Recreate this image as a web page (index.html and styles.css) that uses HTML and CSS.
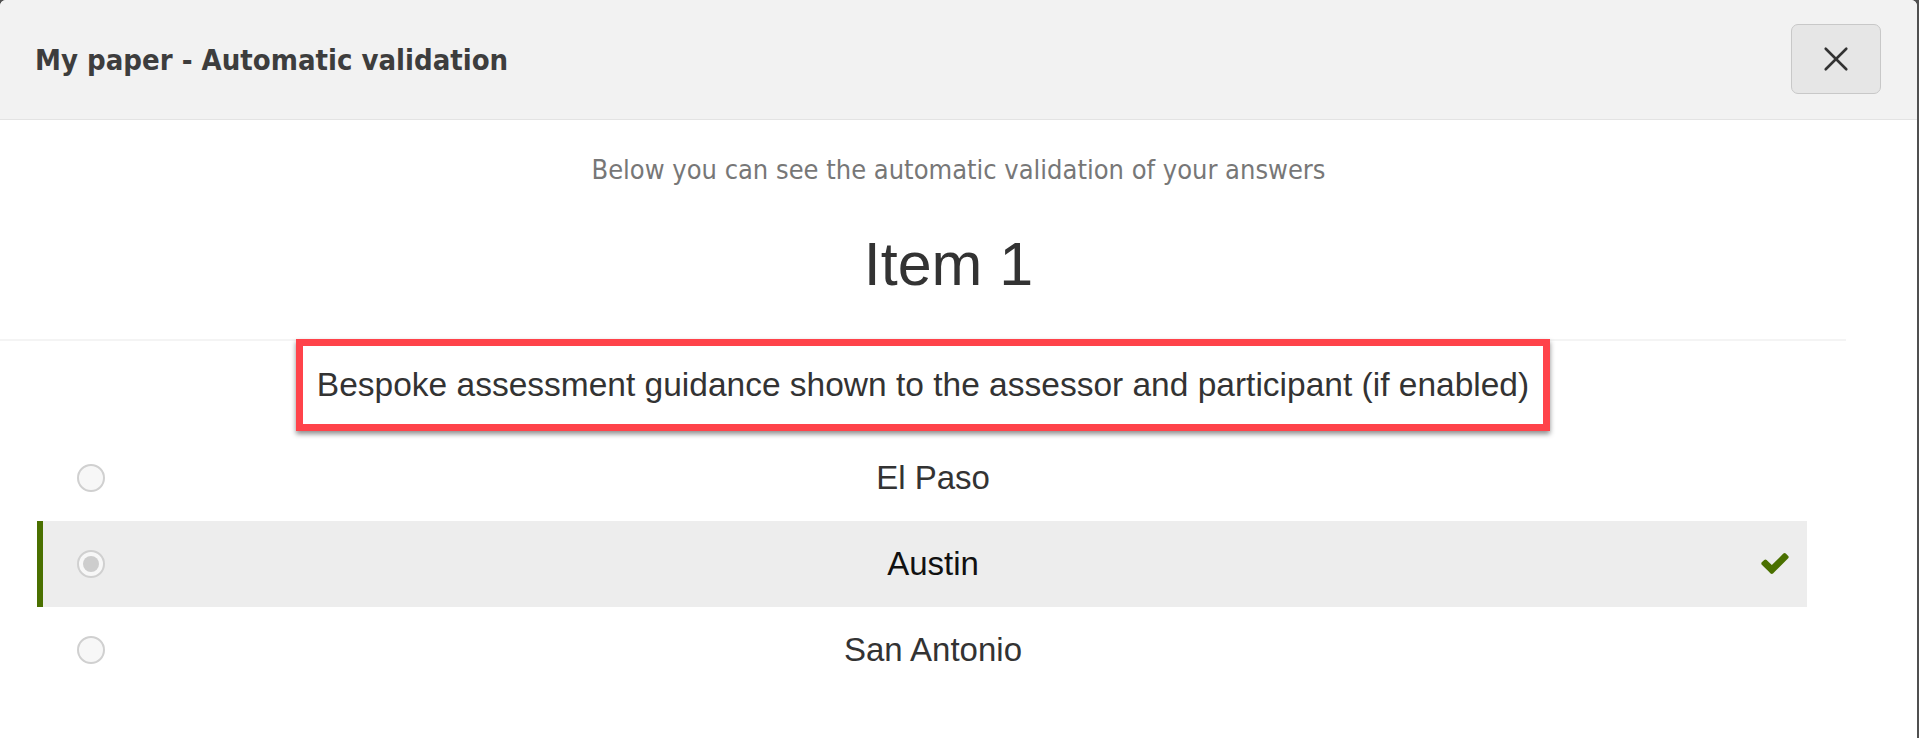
FILE: index.html
```html
<!DOCTYPE html>
<html lang="en">
<head>
  <meta charset="UTF-8" />
  <title>My paper - Automatic validation</title>
  <link rel="stylesheet" href="styles.css">
</head>
<body>
  <div class="modal">
    <div class="modal-header">
      <h1 class="modal-title">My paper - Automatic validation</h1>
      <button class="close-btn" aria-label="Close">
        <svg width="26" height="26" viewBox="0 0 24 24">
          <path d="M2.5 2.5 L21.5 21.5 M21.5 2.5 L2.5 21.5" stroke="#333" stroke-width="2.4" stroke-linecap="round" fill="none"/>
        </svg>
      </button>
    </div>

    <div class="modal-body">
      <p class="intro">Below you can see the automatic validation of your answers</p>
      <h2 class="item-title">Item 1</h2>

      <div class="item-area">
        <div class="guidance">Bespoke assessment guidance shown to the assessor and participant (if enabled)</div>

        <div class="options">
          <div class="option">
            <span class="radio"></span>
            <span class="label">El Paso</span>
          </div>
          <div class="option selected">
            <span class="radio"></span>
            <span class="label">Austin</span>
            <svg class="check" width="28" height="21" viewBox="121 334 1550 1188">
              <path fill="#4a7000" d="M1671 566q0 40-28 68l-724 724-136 136q-28 28-68 28t-68-28l-136-136-362-362q-28-28-28-68t28-68l136-136q28-28 68-28t68 28l294 295 656-657q28-28 68-28t68 28l136 136q28 28 28 68z"/>
            </svg>
          </div>
          <div class="option">
            <span class="radio"></span>
            <span class="label">San Antonio</span>
          </div>
        </div>
      </div>
    </div>
  </div>
</body>
</html>
```

FILE: styles.css
```css
body {
  margin: 0;
  padding: 0;
  background: #505050;
  height: 738px;
  overflow: hidden;
}
.modal {
  width: 1917px;
  height: 738px;
  background: #fff;
  border-radius: 6px 6px 0 0;
  overflow: hidden;
}
.modal-header {
  height: 119px;
  background: #f2f2f2;
  border-bottom: 1px solid #e3e3e3;
  display: flex;
  align-items: center;
  justify-content: space-between;
  padding: 0 36px 0 35px;
}
.modal-title {
  margin: 0;
  font-family: "DejaVu Sans", sans-serif;
  font-stretch: condensed;
  font-weight: bold;
  font-size: 29px;
  color: #3d3d3d;
}
.close-btn {
  width: 90px;
  height: 70px;
  margin-top: -2px;
  background: #e6e6e6;
  border: 1px solid #c8c8c8;
  border-radius: 7px;
  display: flex;
  align-items: center;
  justify-content: center;
  padding: 0;
  cursor: pointer;
}
.modal-body {
  display: flex;
  flex-direction: column;
  align-items: center;
}
.intro {
  margin: 36px 0 0;
  font-family: "DejaVu Sans", sans-serif;
  font-stretch: condensed;
  font-size: 27px;
  color: #777;
  line-height: 28px;
}
.item-title {
  margin: 45px 20px 0 0;
  font-family: "Liberation Sans", Arial, sans-serif;
  font-weight: normal;
  font-size: 61px;
  line-height: 70px;
  color: #333;
  height: 110px;
}
.item-area {
  align-self: flex-start;
  width: 1846px;
  border-top: 2px solid #f4f4f4;
  display: flex;
  flex-direction: column;
  align-items: center;
}
.guidance {
  margin-top: -2px;
  width: 1240px;
  height: 78px;
  border: 7px solid #ff434a;
  box-shadow: 0 3px 5px rgba(0, 0, 0, 0.45);
  display: flex;
  align-items: center;
  justify-content: center;
  font-family: "Liberation Sans", Arial, sans-serif;
  font-size: 33.5px;
  color: #333;
}
.options {
  align-self: stretch;
  margin: 4px 39px 0 37px;
}
.option {
  height: 86px;
  display: flex;
  align-items: center;
  padding: 0 46px 0 34px;
  border-left: 6px solid transparent;
  position: relative;
}
.option.selected {
  background: #ededed;
  border-left-color: #4a7000;
}
.radio {
  width: 24px;
  height: 24px;
  border: 2px solid #d0d0d0;
  border-radius: 50%;
  background: #f7f7f7;
  flex: none;
  display: flex;
  align-items: center;
  justify-content: center;
}
.option.selected .radio::after {
  content: "";
  width: 16px;
  height: 16px;
  border-radius: 50%;
  background: #cdcdcd;
}
.label {
  flex: 1;
  text-align: center;
  font-family: "Liberation Sans", Arial, sans-serif;
  font-size: 33px;
  color: #333;
}
.option.selected .label {
  color: #111;
}
.check {
  position: absolute;
  right: 18px;
  top: 32px;
}
```
